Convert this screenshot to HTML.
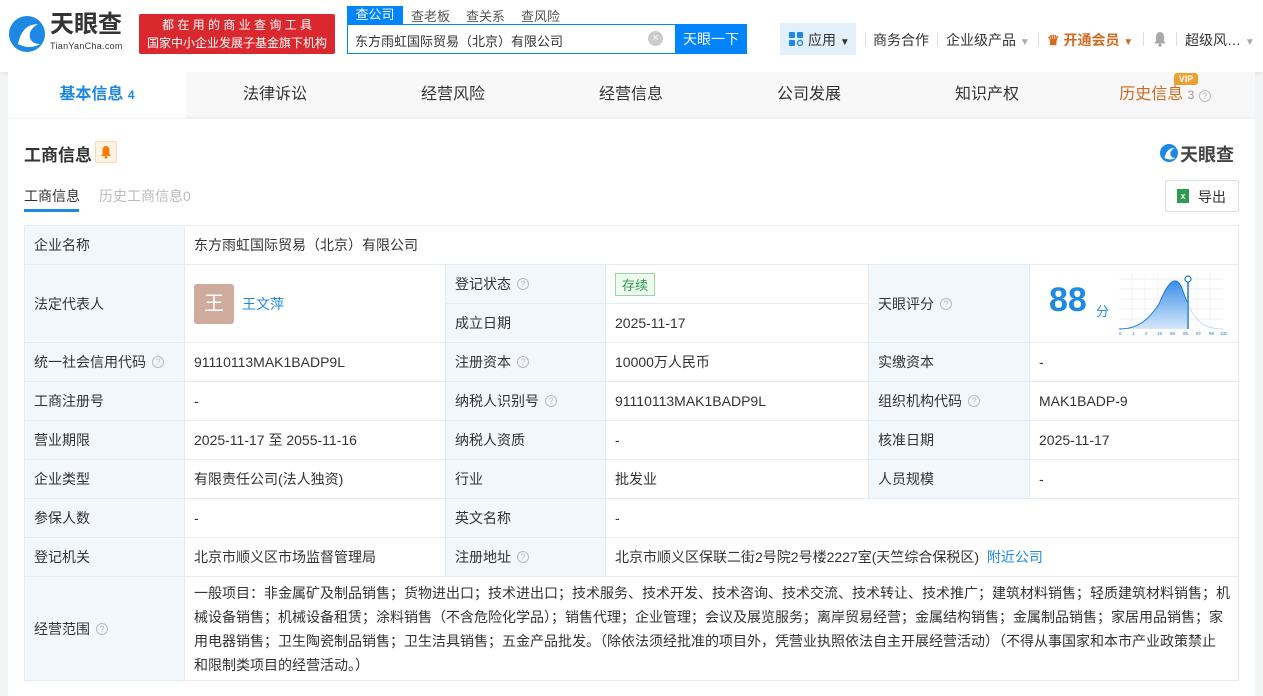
<!DOCTYPE html><html><head><meta charset="utf-8"><style>
*{margin:0;padding:0;box-sizing:border-box}
body{width:1263px;height:696px;background:#f3f4f6;font-family:"Liberation Sans","Noto Sans CJK SC",sans-serif;font-size:14px;color:#333;position:relative;overflow:hidden}
.a{position:absolute}
.hdr{left:0;top:0;width:1263px;height:72px;background:#fff;box-shadow:0 2px 4px rgba(0,0,0,.06)}
.tabs{left:8px;top:72px;width:1247px;height:46px;background:#f8f8f8;border-bottom:1px solid #eee}
.tab{position:absolute;top:0;height:46px;line-height:46px;font-size:16px;color:#333;text-align:center;width:178px}
.card{left:8px;top:119px;width:1247px;height:577px;background:#fff}
.c{position:absolute;border-right:1px solid #e4ecf3;border-bottom:1px solid #e4ecf3;padding-left:9px;display:flex;align-items:center;font-size:14px;color:#333}
.l{background:#f2f7fc}
.q{display:inline-block;width:12px;height:12px;border:1px solid #bbb;border-radius:50%;font-size:9px;line-height:10px;text-align:center;color:#bbb;margin-left:6px}
.sep{position:absolute;top:32px;width:1px;height:14px;background:#ddd}
</style></head><body>
<div class="a hdr">
 <svg class="a" style="left:8px;top:14px" width="38" height="40" viewBox="0 0 38 40"><circle cx="19" cy="20" r="18" fill="#1e88e5"/><path d="M10 30 Q14 10 30 10 Q20 16 22 24 Q24 30 32 30 Q22 36 10 30Z" fill="#fff"/></svg>
 <div class="a" style="left:50px;top:10px;font-size:24px;font-weight:bold;color:#333;line-height:30px">天眼查</div>
 <div class="a" style="left:50px;top:41px;font-size:9px;color:#333;letter-spacing:.3px">TianYanCha.com</div>
 <div class="a" style="left:139px;top:14px;width:196px;height:40px;background:#d9282e;border-radius:2px;color:#fff;font-size:12px;line-height:18px;text-align:center;padding-top:2px">都 在 用 的 商 业 查 询 工 具<br>国家中小企业发展子基金旗下机构</div>
 <div class="a" style="left:347px;top:6px;width:56px;height:18px;background:#0084ff;color:#fff;font-size:13px;text-align:center;line-height:18px">查公司</div>
 <div class="a" style="left:411px;top:6px;font-size:13px;color:#555">查老板</div>
 <div class="a" style="left:466px;top:6px;font-size:13px;color:#555">查关系</div>
 <div class="a" style="left:521px;top:6px;font-size:13px;color:#555">查风险</div>
 <div class="a" style="left:347px;top:24px;width:400px;height:30px;border:1px solid #0084ff;background:#fff"></div>
 <div class="a" style="left:355px;top:31px;font-size:13px;color:#333">东方雨虹国际贸易（北京）有限公司</div>
 <div class="a" style="left:648px;top:31px;width:15px;height:15px;border-radius:50%;background:#ccc;color:#fff;font-size:11px;line-height:15px;text-align:center">×</div>
 <div class="a" style="left:675px;top:24px;width:72px;height:30px;background:#0084ff;color:#fff;font-size:14px;line-height:30px;text-align:center">天眼一下</div>
 <div class="a" style="left:780px;top:23px;width:76px;height:32px;background:#e3effb;border-radius:2px"></div>
 <svg class="a" style="left:789px;top:32px" width="14" height="14"><rect x="0" y="0" width="6" height="6" rx="1" fill="#1e88e5"/><rect x="8" y="0" width="6" height="6" rx="1" fill="#1e88e5"/><rect x="0" y="8" width="6" height="6" rx="1" fill="#1e88e5"/><circle cx="11" cy="11" r="2.5" fill="none" stroke="#1e88e5" stroke-width="1.5"/></svg>
 <div class="a" style="left:808px;top:30px;font-size:14px;color:#333">应用 <span style="font-size:10px">▼</span></div>
 <div class="sep" style="left:865px"></div>
 <div class="a" style="left:873px;top:30px;font-size:14px">商务合作</div>
 <div class="sep" style="left:937px"></div>
 <div class="a" style="left:946px;top:30px;font-size:14px">企业级产品 <span style="color:#aaa;font-size:10px">▼</span></div>
 <div class="sep" style="left:1038px"></div>
 <div class="a" style="left:1047px;top:30px;font-size:14px;color:#d2691e;font-weight:bold">♛ 开通会员 <span style="font-size:10px">▼</span></div>
 <div class="sep" style="left:1143px"></div>
 <svg class="a" style="left:1153px;top:31px" width="14" height="16" viewBox="0 0 14 16"><path d="M7 1C4 1 3 4 3 6V10L1 12.5H13L11 10V6C11 4 10 1 7 1Z" fill="#aaa"/><circle cx="7" cy="14.2" r="1.6" fill="#aaa"/></svg>
 <div class="sep" style="left:1176px"></div>
 <div class="a" style="left:1185px;top:30px;font-size:14px">超级风… <span style="color:#aaa;font-size:10px">▼</span></div>
</div>
<div class="a tabs">
 <div class="tab" style="left:0;background:#fff;color:#1e88e5;font-weight:bold">基本信息 <span style="font-size:12px">4</span></div>
 <div class="tab" style="left:178px">法律诉讼</div>
 <div class="tab" style="left:356px">经营风险</div>
 <div class="tab" style="left:534px">经营信息</div>
 <div class="tab" style="left:712px">公司发展</div>
 <div class="tab" style="left:890px">知识产权</div>
 <div class="tab" style="left:1068px;color:#d2691e">历史信息 <span style="color:#999;font-size:12px">3</span> <span class="q" style="margin-left:0">?</span></div>
 <div class="a" style="left:1166px;top:1px;width:24px;height:12px;background:#f0a030;color:#fff;font-size:9px;font-weight:bold;line-height:12px;text-align:center;border-radius:3px 3px 3px 0">VIP</div>
</div>
<div class="a card"></div>
<div class="a" style="left:24px;top:141px;font-size:17px;font-weight:bold;color:#333">工商信息</div>
<div class="a" style="left:95px;top:141px;width:22px;height:22px;background:#fff3e6;border:1px solid #fbd7b0;border-radius:2px"></div>
<svg class="a" style="left:100px;top:145px" width="12" height="14" viewBox="0 0 14 16"><path d="M7 1C4 1 3 4 3 6V10L1 12.5H13L11 10V6C11 4 10 1 7 1Z" fill="#ff7a00"/><circle cx="7" cy="14.2" r="1.6" fill="#ff7a00"/></svg>
<svg class="a" style="left:1159px;top:143px" width="20" height="20" viewBox="0 0 38 40"><circle cx="19" cy="20" r="18" fill="#1e88e5"/><path d="M10 30 Q14 10 30 10 Q20 16 22 24 Q24 30 32 30 Q22 36 10 30Z" fill="#fff"/></svg>
<div class="a" style="left:1180px;top:141px;font-size:18px;font-weight:bold;color:#444">天眼查</div>
<div class="a" style="left:24px;top:186px;font-size:14px;color:#333">工商信息</div>
<div class="a" style="left:24px;top:209px;width:55px;height:3px;background:#1e88e5"></div>
<div class="a" style="left:99px;top:186px;font-size:14px;color:#bbb">历史工商信息0</div>
<div class="a" style="left:1165px;top:180px;width:74px;height:32px;border:1px solid #ddd;border-radius:2px;background:#fff"></div>
<div class="a" style="left:1177px;top:189px;width:12px;height:14px;background:#2e9b4f;color:#fff;font-size:9px;text-align:center;line-height:14px;font-weight:bold">x</div>
<div class="a" style="left:1198px;top:187px;font-size:14px">导出</div>

<div class="a" style="left:24px;top:225px;width:1215px;height:456px;border-top:1px solid #e4ecf3;border-left:1px solid #e4ecf3">
<div class="c l" style="left:0;top:0;width:160px;height:39px">企业名称</div>
<div class="c" style="left:160px;top:0;width:1054px;height:39px">东方雨虹国际贸易（北京）有限公司</div>
<div class="c l" style="left:0;top:39px;width:160px;height:78px">法定代表人</div>
<div class="c" style="left:160px;top:39px;width:261px;height:78px"><span style="width:40px;height:40px;background:#cfab9b;border-radius:3px;color:#fff;font-size:20px;text-align:center;line-height:40px;margin-right:8px">王</span><span style="color:#1e88e5">王文萍</span></div>
<div class="c l" style="left:421px;top:39px;width:160px;height:39px">登记状态<span class="q">?</span></div>
<div class="c" style="left:581px;top:39px;width:263px;height:39px"><span style="border:1px solid #9cd6a8;background:#effaf1;color:#2a9a4a;font-size:13px;padding:1px 6px">存续</span></div>
<div class="c l" style="left:421px;top:78px;width:160px;height:39px">成立日期</div>
<div class="c" style="left:581px;top:78px;width:263px;height:39px">2025-11-17</div>
<div class="c l" style="left:844px;top:39px;width:161px;height:78px">天眼评分<span class="q">?</span></div>
<div class="c" style="left:1005px;top:39px;width:209px;height:78px">
 <span style="position:absolute;left:19px;top:16px;font-size:34px;font-weight:bold;color:#1e88e5">88</span><span style="position:absolute;left:66px;top:36px;font-size:13px;color:#1e88e5">分</span>
 <svg style="position:absolute;left:89px;top:9px" width="108" height="62" viewBox="0 0 108 62"><defs><linearGradient id="g" x1="0" y1="0" x2="0" y2="1"><stop offset="0" stop-color="#3b8ee8"/><stop offset="1" stop-color="#d6e8fb"/></linearGradient></defs>
 <g stroke="#eee" stroke-width=".7"><path d="M0 5H104M0 15H104M0 25H104M0 35H104M0 45H104M13 0V55M26 0V55M39 0V55M52 0V55M65 0V55M78 0V55M91 0V55"/></g>
 <path d="M0 55 C20 55 30 45 40 30 C48 10 56 0 62 12 L68 28 V55Z" fill="url(#g)"/>
 <path d="M68 28 C76 48 86 55 104 55" fill="none" stroke="#c8dcf2"/>
 <path d="M0 55 C20 55 30 45 40 30 C48 10 56 0 62 12 L68 28" fill="none" stroke="#1e78d8" stroke-width="1"/>
 <path d="M69 6V55" stroke="#1e78d8" stroke-width="1.5"/><circle cx="69" cy="5" r="3" fill="#fff" stroke="#1e78d8" stroke-width="1.2"/>
 <text y="61" font-size="4.5" fill="#1e78d8" font-family="Liberation Sans"><tspan x="0">0</tspan><tspan x="13">1</tspan><tspan x="26">3</tspan><tspan x="38">15</tspan><tspan x="51">50</tspan><tspan x="64">85</tspan><tspan x="77">97</tspan><tspan x="90">99</tspan><tspan x="101">100</tspan></text></svg>
</div>
<div class="c l" style="left:0;top:117px;width:160px;height:39px">统一社会信用代码<span class="q">?</span></div>
<div class="c" style="left:160px;top:117px;width:261px;height:39px">91110113MAK1BADP9L</div>
<div class="c l" style="left:421px;top:117px;width:160px;height:39px">注册资本<span class="q">?</span></div>
<div class="c" style="left:581px;top:117px;width:263px;height:39px">10000万人民币</div>
<div class="c l" style="left:844px;top:117px;width:161px;height:39px">实缴资本</div>
<div class="c" style="left:1005px;top:117px;width:209px;height:39px">-</div>
<div class="c l" style="left:0;top:156px;width:160px;height:39px">工商注册号</div>
<div class="c" style="left:160px;top:156px;width:261px;height:39px">-</div>
<div class="c l" style="left:421px;top:156px;width:160px;height:39px">纳税人识别号<span class="q">?</span></div>
<div class="c" style="left:581px;top:156px;width:263px;height:39px">91110113MAK1BADP9L</div>
<div class="c l" style="left:844px;top:156px;width:161px;height:39px">组织机构代码<span class="q">?</span></div>
<div class="c" style="left:1005px;top:156px;width:209px;height:39px">MAK1BADP-9</div>
<div class="c l" style="left:0;top:195px;width:160px;height:39px">营业期限</div>
<div class="c" style="left:160px;top:195px;width:261px;height:39px">2025-11-17 至 2055-11-16</div>
<div class="c l" style="left:421px;top:195px;width:160px;height:39px">纳税人资质</div>
<div class="c" style="left:581px;top:195px;width:263px;height:39px">-</div>
<div class="c l" style="left:844px;top:195px;width:161px;height:39px">核准日期</div>
<div class="c" style="left:1005px;top:195px;width:209px;height:39px">2025-11-17</div>
<div class="c l" style="left:0;top:234px;width:160px;height:39px">企业类型</div>
<div class="c" style="left:160px;top:234px;width:261px;height:39px">有限责任公司(法人独资)</div>
<div class="c l" style="left:421px;top:234px;width:160px;height:39px">行业</div>
<div class="c" style="left:581px;top:234px;width:263px;height:39px">批发业</div>
<div class="c l" style="left:844px;top:234px;width:161px;height:39px">人员规模</div>
<div class="c" style="left:1005px;top:234px;width:209px;height:39px">-</div>
<div class="c l" style="left:0;top:273px;width:160px;height:39px">参保人数</div>
<div class="c" style="left:160px;top:273px;width:261px;height:39px">-</div>
<div class="c l" style="left:421px;top:273px;width:160px;height:39px">英文名称</div>
<div class="c" style="left:581px;top:273px;width:633px;height:39px">-</div>
<div class="c l" style="left:0;top:312px;width:160px;height:39px">登记机关</div>
<div class="c" style="left:160px;top:312px;width:261px;height:39px">北京市顺义区市场监督管理局</div>
<div class="c l" style="left:421px;top:312px;width:160px;height:39px">注册地址<span class="q">?</span></div>
<div class="c" style="left:581px;top:312px;width:633px;height:39px">北京市顺义区保联二街2号院2号楼2227室(天竺综合保税区)&nbsp;&nbsp;<span style="color:#1e88e5">附近公司</span></div>
<div class="c l" style="left:0;top:351px;width:160px;height:104px">经营范围<span class="q">?</span></div>
<div class="c" style="left:160px;top:351px;width:1054px;height:104px;line-height:24px;white-space:nowrap;overflow:hidden"><div>一般项目：非金属矿及制品销售；货物进出口；技术进出口；技术服务、技术开发、技术咨询、技术交流、技术转让、技术推广；建筑材料销售；轻质建筑材料销售；机<br>械设备销售；机械设备租赁；涂料销售（不含危险化学品）；销售代理；企业管理；会议及展览服务；离岸贸易经营；金属结构销售；金属制品销售；家居用品销售；家<br>用电器销售；卫生陶瓷制品销售；卫生洁具销售；五金产品批发。（除依法须经批准的项目外，凭营业执照依法自主开展经营活动）（不得从事国家和本市产业政策禁止<br>和限制类项目的经营活动。）</div></div>
</div>
</body></html>
